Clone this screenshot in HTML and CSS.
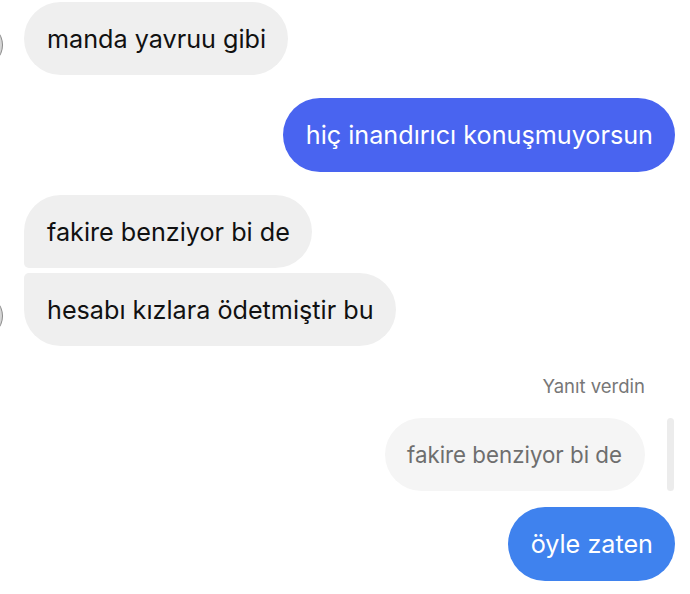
FILE: index.html
```html
<!DOCTYPE html>
<html lang="tr">
<head>
<meta charset="utf-8">
<link rel="stylesheet" href="styles.css">
</head>
<body>
<div class="chat">
  <div class="row in first">
    <span class="avatar"></span>
    <div class="bubble gray">manda yavruu gibi</div>
  </div>
  <div class="row out gap">
    <div class="bubble indigo">hiç inandırıcı konuşmuyorsun</div>
  </div>
  <div class="row in gap">
    <div class="bubble gray top">fakire benziyor bi de</div>
  </div>
  <div class="row in tight">
    <span class="avatar"></span>
    <div class="bubble gray bottom">hesabı kızlara ödetmiştir bu</div>
  </div>
  <div class="reply-label">Yanıt verdin</div>
  <div class="row out reply">
    <div class="bubble quoted">fakire benziyor bi de</div>
    <span class="reply-bar"></span>
  </div>
  <div class="row out small-gap">
    <div class="bubble blue">öyle zaten</div>
  </div>
</div>
</body>
</html>
```
FILE: styles.css
```css
html, body {
  margin: 0;
  padding: 0;
  background: #ffffff;
}
body {
  font-family: "Inter", "Roboto", "Liberation Sans", sans-serif;
  -webkit-font-smoothing: antialiased;
}
.chat {
  display: flex;
  flex-direction: column;
  padding: 2px 15px 0 24px;
}
.row {
  display: flex;
  position: relative;
}
.row.in { justify-content: flex-start; }
.row.out { justify-content: flex-end; }
.row.gap { margin-top: 23px; }
.row.tight { margin-top: 5px; }
.row.small-gap { margin-top: 16px; }
.row.reply { margin-top: 21px; align-items: stretch; gap: 22px; margin-right: 1px; }
.bubble {
  height: 73px;
  box-sizing: border-box;
  display: flex;
  align-items: center;
  padding: 0 22px 0 23px;
  border-radius: 37px;
  font-size: 25.2px;
  letter-spacing: 0;
  white-space: nowrap;
}
.gray { background: #efefef; color: #111111; }
.gray.top { border-bottom-left-radius: 5px; }
.gray.bottom { border-top-left-radius: 5px; }
.indigo { background: #4964f0; color: #ffffff; height: 74px; }
.blue { background: #3f82ee; color: #ffffff; height: 74px; }
.quoted { background: #f5f5f5; color: #6e6e6e; font-size: 22.3px; padding: 0 23px 0 22px; }
.reply-bar {
  width: 7px;
  border-radius: 4px;
  background: #ececec;
}
.reply-label {
  align-self: flex-end;
  margin: 29px 30px 0 0;
  font-size: 18.5px;
  color: #777777;
  line-height: 22px;
}
.avatar {
  position: absolute;
  left: -65px;
  top: 21px;
  width: 42px;
  height: 42px;
  border-radius: 50%;
  background: #d6d6d6;
  border: 1px solid #8a8a8a;
}
```
